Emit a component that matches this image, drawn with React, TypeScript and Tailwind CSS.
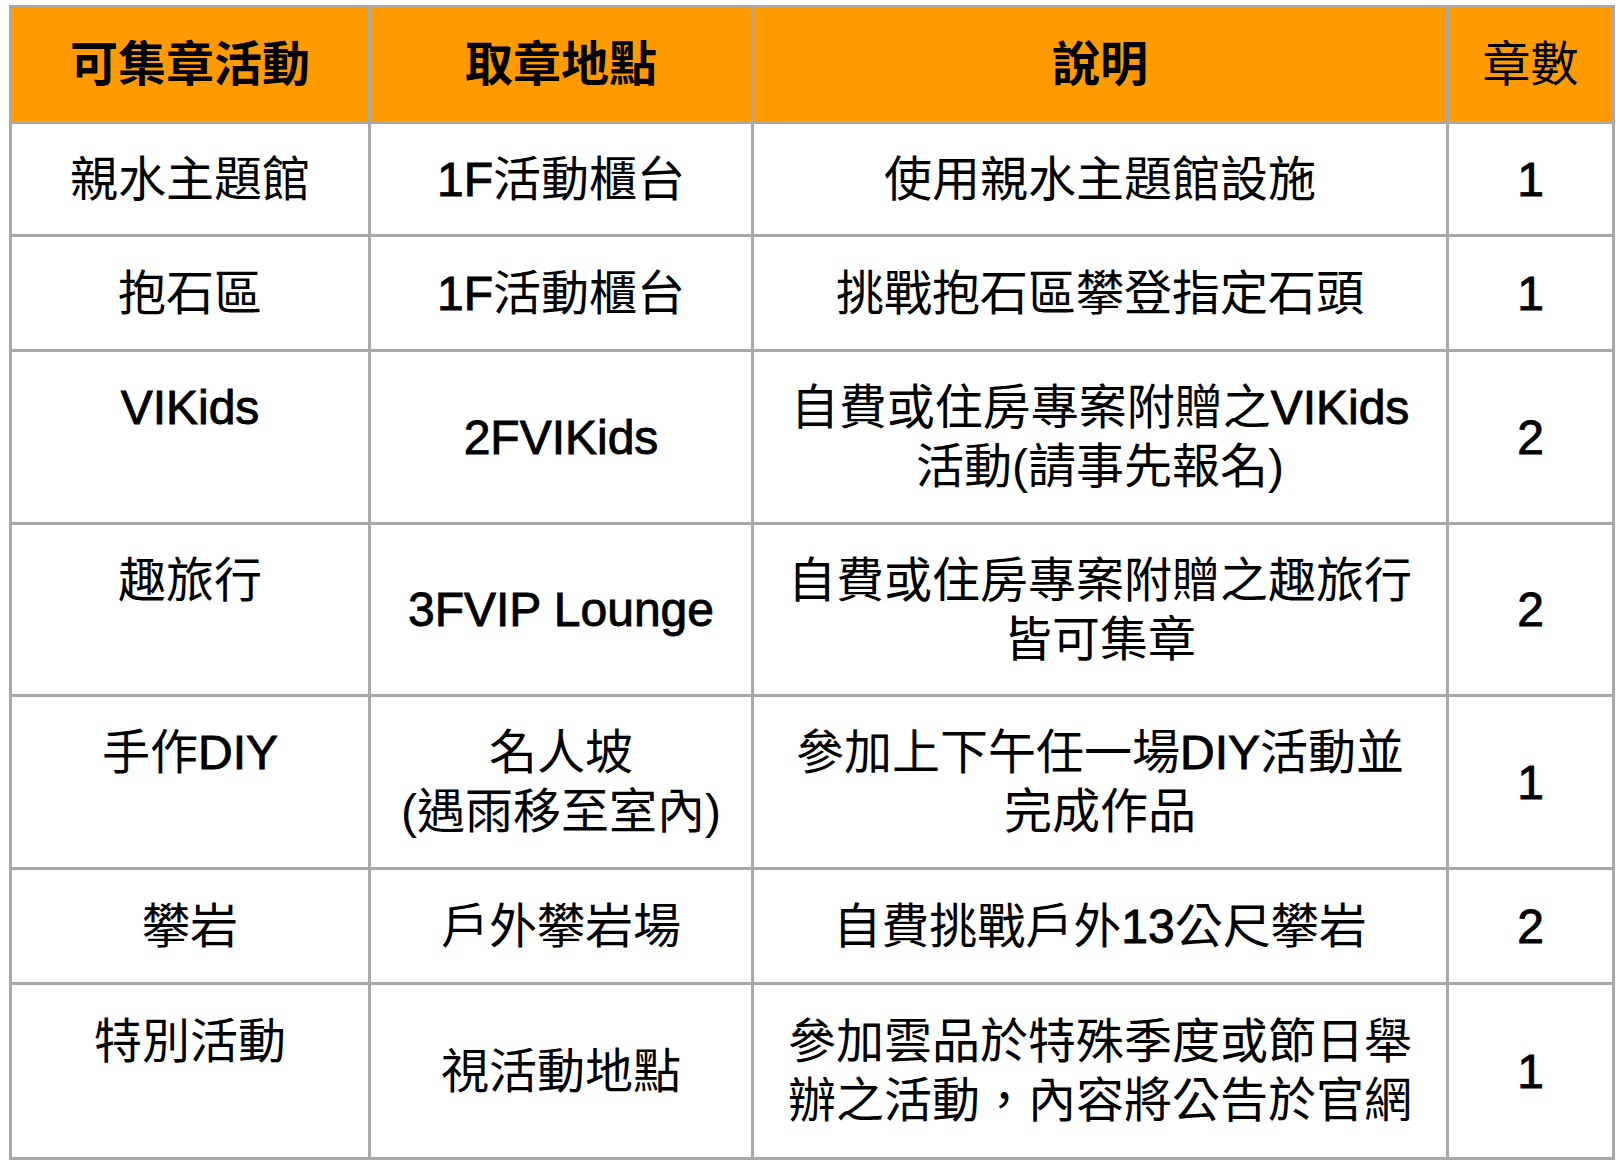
import React from 'react';

type Row = {
  activity: string;
  place: string[];
  note: string[];
  stamps: string;
  height: string;
  tall?: boolean;
};

const rows: Row[] = [
  { activity: '親水主題館', place: ['1F活動櫃台'], note: ['使用親水主題館設施'], stamps: '1', height: 'h-[113px]' },
  { activity: '抱石區', place: ['1F活動櫃台'], note: ['挑戰抱石區攀登指定石頭'], stamps: '1', height: 'h-[115px]' },
  { activity: 'VIKids', place: ['2FVIKids'], note: ['自費或住房專案附贈之VIKids', '活動(請事先報名)'], stamps: '2', height: 'h-[173px]', tall: true },
  { activity: '趣旅行', place: ['3FVIP Lounge'], note: ['自費或住房專案附贈之趣旅行', '皆可集章'], stamps: '2', height: 'h-[172px]', tall: true },
  { activity: '手作DIY', place: ['名人坡', '(遇雨移至室內)'], note: ['參加上下午任一場DIY活動並', '完成作品'], stamps: '1', height: 'h-[173px]', tall: true },
  { activity: '攀岩', place: ['戶外攀岩場'], note: ['自費挑戰戶外13公尺攀岩'], stamps: '2', height: 'h-[115px]' },
  { activity: '特別活動', place: ['視活動地點'], note: ['參加雲品於特殊季度或節日舉', '辦之活動，內容將公告於官網'], stamps: '1', height: 'h-[175px]', tall: true },
];

// latin runs look a little heavier than the chinese in the original
const Mixed = ({ text }: { text: string }) => (
  <>
    {text.split(/([A-Za-z0-9][A-Za-z0-9 ]*)/).map((part, i) =>
      /^[A-Za-z0-9]/.test(part) ? (
        <span key={i} className="[-webkit-text-stroke:0.9px_black]">{part}</span>
      ) : (
        <span key={i}>{part}</span>
      )
    )}
  </>
);

const Lines = ({ lines }: { lines: string[] }) => (
  <>
    {lines.map((line, i) => (
      <div key={i}>
        <Mixed text={line} />
      </div>
    ))}
  </>
);

const cell = 'border-[3px] border-[#a9a9a9] text-center align-middle p-0';

const App: React.FC = () => {
  return (
    <div className="min-h-screen bg-white pt-[5px] pl-[9px]">
      <table
        className="table-fixed border-collapse w-[1603px] text-black text-[48px] leading-[59px]"
        style={{ fontFamily: '"Liberation Sans", "Noto Sans CJK TC", sans-serif' }}
      >
        <colgroup>
          <col className="w-[359px]" />
          <col className="w-[383px]" />
          <col className="w-[695px]" />
          <col className="w-[166px]" />
        </colgroup>
        <thead>
          <tr className="bg-[#ff9a00]">
            <th className={`${cell} h-[116px] font-bold`}>可集章活動</th>
            <th className={`${cell} font-bold`}>取章地點</th>
            <th className={`${cell} font-bold`}>說明</th>
            <th className={`${cell} font-normal`}>章數</th>
          </tr>
        </thead>
        <tbody>
          {rows.map((row) => (
            <tr key={row.activity}>
              <td className={`${cell} ${row.height} ${row.tall ? 'pb-[59px]' : ''}`}>
                <Mixed text={row.activity} />
              </td>
              <td className={cell}>
                <Lines lines={row.place} />
              </td>
              <td className={cell}>
                <Lines lines={row.note} />
              </td>
              <td className={cell}>
                <Mixed text={row.stamps} />
              </td>
            </tr>
          ))}
        </tbody>
      </table>
    </div>
  );
};

export default App;
